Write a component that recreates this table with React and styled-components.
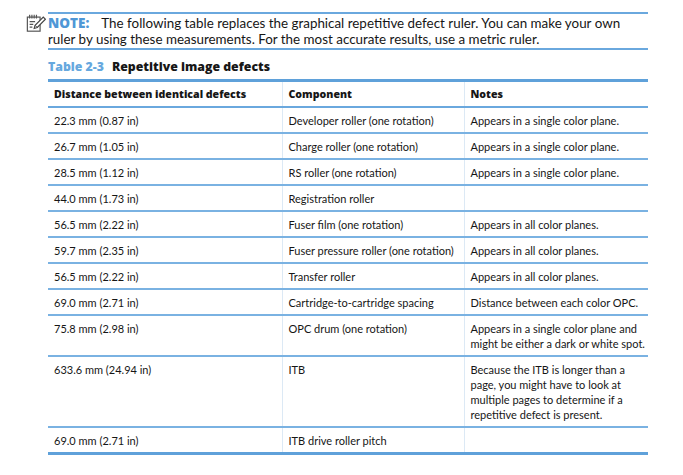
import React from 'react'
import styled, { createGlobalStyle } from 'styled-components'

const Global = createGlobalStyle`
  html, body { margin: 0; padding: 0; background: #fff; }
  body { font-family: Lato, 'Liberation Sans', sans-serif; color: #161616; }
`

const heavy = `'Open Sans', Lato, sans-serif`

const Page = styled.div`
  display: grid;
  grid-template-columns: 48px 600px;
  padding-top: 12px;
`

const IconCell = styled.div`
  display: flex;
  justify-content: flex-start;
  padding: 1px 0 0 26px;
`

const Note = styled.div`
  border-top: 2px solid #6aa8de;
  border-bottom: 2px solid #6aa8de;
  padding: 1px 0 1px;
  font-size: 13.4px;
  line-height: 16px;

  b {
    font-family: ${heavy};
    color: #4f97d6;
    font-weight: 800;
    font-size: 13.5px;
    margin-right: 12px;
  }
`

const Caption = styled.div`
  grid-column: 2;
  margin-top: 10px;
  font-family: ${heavy};
  font-size: 12.3px;
  font-weight: 800;
  line-height: 14px;

  span {
    color: #66a8de;
    margin-right: 8px;
  }
`

const Table = styled.table`
  grid-column: 2;
  margin-top: 5px;
  width: 600px;
  border-collapse: collapse;
  table-layout: fixed;
  border-top: 3px solid #5fa1da;
  border-bottom: 3px solid #5fa1da;
  font-size: 11px;
`

const Head = styled.th`
  text-align: left;
  font-family: ${heavy};
  font-weight: 800;
  font-size: 10.6px;
  padding: 6px 6px 5px;
  line-height: 13px;
  border-bottom: 2px solid #6aa8de;
  border-left: ${({ first }) => (first ? 'none' : '1px solid #dce9f5')};
`

const Cell = styled.td`
  vertical-align: top;
  padding: 5px 6px 4px;
  line-height: 15px;
  white-space: nowrap;
  border-bottom: ${({ last }) => (last ? 'none' : '2px solid #7ab2e2')};
  border-left: ${({ first }) => (first ? 'none' : '1px solid #dce9f5')};
`

const NoteIcon = () => (
  <svg width="20" height="20" viewBox="0 0 22 21">
    <g fill="none" stroke="#555" strokeWidth="1.3">
      <rect x="1.5" y="4" width="14" height="15.5" />
      <path d="M4 1.5v4M6.5 1.5v4M9 1.5v4M11.5 1.5v4" />
      <path d="M4 9h6M4 12h4M4 15h3" />
    </g>
    <path d="M9 16.5l1-3.5 9-9 2.4 2.4-9 9z" fill="#fff" stroke="#444" strokeWidth="1.3" />
    <path d="M10 13l2.4 2.4" stroke="#444" strokeWidth="1" />
  </svg>
)

const rows = [
  ['22.3 mm (0.87 in)', 'Developer roller (one rotation)', ['Appears in a single color plane.']],
  ['26.7 mm (1.05 in)', 'Charge roller (one rotation)', ['Appears in a single color plane.']],
  ['28.5 mm (1.12 in)', 'RS roller (one rotation)', ['Appears in a single color plane.']],
  ['44.0 mm (1.73 in)', 'Registration roller', []],
  ['56.5 mm (2.22 in)', 'Fuser film (one rotation)', ['Appears in all color planes.']],
  ['59.7 mm (2.35 in)', 'Fuser pressure roller (one rotation)', ['Appears in all color planes.']],
  ['56.5 mm (2.22 in)', 'Transfer roller', ['Appears in all color planes.']],
  ['69.0 mm (2.71 in)', 'Cartridge-to-cartridge spacing', ['Distance between each color OPC.']],
  ['75.8 mm (2.98 in)', 'OPC drum (one rotation)', ['Appears in a single color plane and', 'might be either a dark or white spot.']],
  ['633.6 mm (24.94 in)', 'ITB', ['Because the ITB is longer than a', 'page, you might have to look at', 'multiple pages to determine if a', 'repetitive defect is present.']],
  ['69.0 mm (2.71 in)', 'ITB drive roller pitch', []],
]

export default function App() {
  return (
    <>
      <Global />
      <Page>
        <IconCell><NoteIcon /></IconCell>
        <Note>
          <b>NOTE:</b>The following table replaces the graphical repetitive defect ruler. You can make your own<br />
          ruler by using these measurements. For the most accurate results, use a metric ruler.
        </Note>
        <Caption><span>Table 2-3</span>Repetitive image defects</Caption>
        <Table>
          <colgroup>
            <col style={{ width: 234 }} />
            <col style={{ width: 182 }} />
            <col style={{ width: 184 }} />
          </colgroup>
          <thead>
            <tr>
              <Head first>Distance between identical defects</Head>
              <Head>Component</Head>
              <Head>Notes</Head>
            </tr>
          </thead>
          <tbody>
            {rows.map(([dist, comp, notes], i) => {
              const last = i === rows.length - 1
              return (
                <tr key={i}>
                  <Cell first last={last}>{dist}</Cell>
                  <Cell last={last}>{comp}</Cell>
                  <Cell last={last}>
                    {notes.map((n, j) => (
                      <React.Fragment key={j}>{j > 0 && <br />}{n}</React.Fragment>
                    ))}
                  </Cell>
                </tr>
              )
            })}
          </tbody>
        </Table>
      </Page>
    </>
  )
}
